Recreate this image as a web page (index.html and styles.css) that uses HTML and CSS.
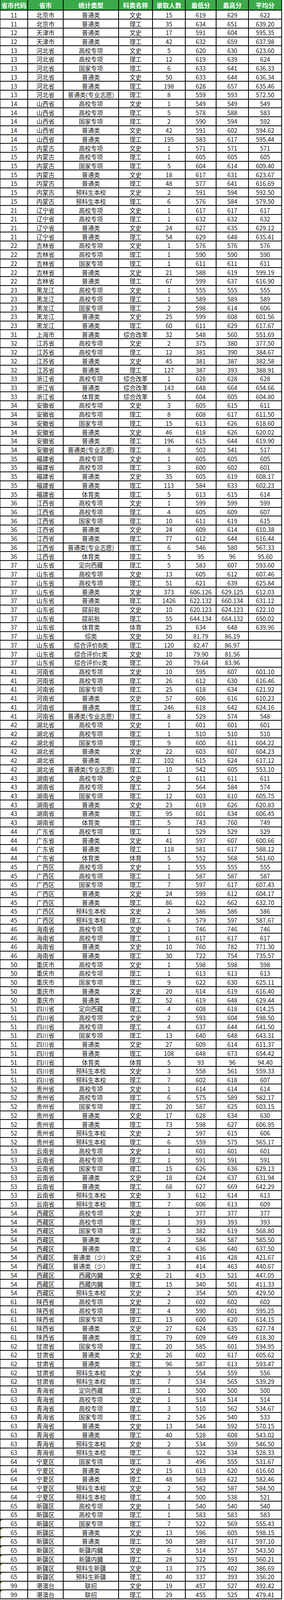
FILE: index.html
```html
<!DOCTYPE html>
<html lang="zh-CN">
<head>
<meta charset="utf-8">
<title>录取分数统计</title>
<link rel="stylesheet" href="styles.css">
</head>
<body>
<table class="scores">
<thead>
<tr><th>省市代码</th><th>省市</th><th>统计类型</th><th>科类名称</th><th>录取人数</th><th>最低分</th><th>最高分</th><th>平均分</th></tr>
</thead>
<tbody>
<tr><td>11</td><td>北京市</td><td>普通类</td><td>文史</td><td>15</td><td>619</td><td>629</td><td>622</td></tr>
<tr><td>11</td><td>北京市</td><td>普通类</td><td>理工</td><td>35</td><td>634</td><td>651</td><td>639.20</td></tr>
<tr><td>12</td><td>天津市</td><td>普通类</td><td>文史</td><td>17</td><td>591</td><td>604</td><td>595.35</td></tr>
<tr><td>12</td><td>天津市</td><td>普通类</td><td>理工</td><td>42</td><td>632</td><td>659</td><td>637.98</td></tr>
<tr><td>13</td><td>河北省</td><td>高校专项</td><td>文史</td><td>5</td><td>620</td><td>630</td><td>623.60</td></tr>
<tr><td>13</td><td>河北省</td><td>高校专项</td><td>理工</td><td>12</td><td>619</td><td>639</td><td>624</td></tr>
<tr><td>13</td><td>河北省</td><td>国家专项</td><td>理工</td><td>6</td><td>633</td><td>641</td><td>636.33</td></tr>
<tr><td>13</td><td>河北省</td><td>普通类</td><td>文史</td><td>50</td><td>633</td><td>644</td><td>636.34</td></tr>
<tr><td>13</td><td>河北省</td><td>普通类</td><td>理工</td><td>198</td><td>628</td><td>657</td><td>635.46</td></tr>
<tr><td>13</td><td>河北省</td><td>普通类(专业志愿)</td><td>理工</td><td>8</td><td>559</td><td>593</td><td>572.50</td></tr>
<tr><td>14</td><td>山西省</td><td>高校专项</td><td>文史</td><td>1</td><td>549</td><td>549</td><td>549</td></tr>
<tr><td>14</td><td>山西省</td><td>高校专项</td><td>理工</td><td>5</td><td>578</td><td>588</td><td>583</td></tr>
<tr><td>14</td><td>山西省</td><td>国家专项</td><td>理工</td><td>2</td><td>590</td><td>594</td><td>592</td></tr>
<tr><td>14</td><td>山西省</td><td>普通类</td><td>文史</td><td>42</td><td>591</td><td>602</td><td>594.62</td></tr>
<tr><td>14</td><td>山西省</td><td>普通类</td><td>理工</td><td>195</td><td>583</td><td>617</td><td>595.44</td></tr>
<tr><td>15</td><td>内蒙古</td><td>高校专项</td><td>文史</td><td>1</td><td>571</td><td>571</td><td>571</td></tr>
<tr><td>15</td><td>内蒙古</td><td>高校专项</td><td>理工</td><td>1</td><td>605</td><td>605</td><td>605</td></tr>
<tr><td>15</td><td>内蒙古</td><td>国家专项</td><td>理工</td><td>5</td><td>604</td><td>614</td><td>609.40</td></tr>
<tr><td>15</td><td>内蒙古</td><td>普通类</td><td>文史</td><td>18</td><td>617</td><td>631</td><td>623.67</td></tr>
<tr><td>15</td><td>内蒙古</td><td>普通类</td><td>理工</td><td>48</td><td>577</td><td>641</td><td>616.69</td></tr>
<tr><td>15</td><td>内蒙古</td><td>预科生本校</td><td>文史</td><td>2</td><td>591</td><td>594</td><td>592.50</td></tr>
<tr><td>15</td><td>内蒙古</td><td>预科生本校</td><td>理工</td><td>6</td><td>576</td><td>584</td><td>579.50</td></tr>
<tr><td>21</td><td>辽宁省</td><td>高校专项</td><td>文史</td><td>1</td><td>617</td><td>617</td><td>617</td></tr>
<tr><td>21</td><td>辽宁省</td><td>高校专项</td><td>理工</td><td>1</td><td>632</td><td>632</td><td>632</td></tr>
<tr><td>21</td><td>辽宁省</td><td>普通类</td><td>文史</td><td>24</td><td>627</td><td>635</td><td>629.12</td></tr>
<tr><td>21</td><td>辽宁省</td><td>普通类</td><td>理工</td><td>54</td><td>629</td><td>648</td><td>635.41</td></tr>
<tr><td>22</td><td>吉林省</td><td>高校专项</td><td>文史</td><td>1</td><td>576</td><td>576</td><td>576</td></tr>
<tr><td>22</td><td>吉林省</td><td>高校专项</td><td>理工</td><td>1</td><td>590</td><td>590</td><td>590</td></tr>
<tr><td>22</td><td>吉林省</td><td>国家专项</td><td>理工</td><td>1</td><td>611</td><td>611</td><td>611</td></tr>
<tr><td>22</td><td>吉林省</td><td>普通类</td><td>文史</td><td>21</td><td>588</td><td>619</td><td>599.19</td></tr>
<tr><td>22</td><td>吉林省</td><td>普通类</td><td>理工</td><td>67</td><td>599</td><td>637</td><td>616.90</td></tr>
<tr><td>23</td><td>黑龙江</td><td>高校专项</td><td>文史</td><td>1</td><td>555</td><td>555</td><td>555</td></tr>
<tr><td>23</td><td>黑龙江</td><td>高校专项</td><td>理工</td><td>1</td><td>589</td><td>589</td><td>589</td></tr>
<tr><td>23</td><td>黑龙江</td><td>国家专项</td><td>理工</td><td>2</td><td>598</td><td>614</td><td>606</td></tr>
<tr><td>23</td><td>黑龙江</td><td>普通类</td><td>文史</td><td>25</td><td>599</td><td>608</td><td>601.56</td></tr>
<tr><td>23</td><td>黑龙江</td><td>普通类</td><td>理工</td><td>60</td><td>611</td><td>629</td><td>617.67</td></tr>
<tr><td>31</td><td>上海市</td><td>普通类</td><td>综合改革</td><td>32</td><td>548</td><td>560</td><td>551.69</td></tr>
<tr><td>32</td><td>江苏省</td><td>高校专项</td><td>文史</td><td>2</td><td>375</td><td>380</td><td>377.50</td></tr>
<tr><td>32</td><td>江苏省</td><td>高校专项</td><td>理工</td><td>12</td><td>381</td><td>390</td><td>384.67</td></tr>
<tr><td>32</td><td>江苏省</td><td>普通类</td><td>文史</td><td>45</td><td>381</td><td>387</td><td>382.58</td></tr>
<tr><td>32</td><td>江苏省</td><td>普通类</td><td>理工</td><td>127</td><td>387</td><td>393</td><td>388.91</td></tr>
<tr><td>33</td><td>浙江省</td><td>高校专项</td><td>综合改革</td><td>1</td><td>628</td><td>628</td><td>628</td></tr>
<tr><td>33</td><td>浙江省</td><td>普通类</td><td>综合改革</td><td>143</td><td>648</td><td>664</td><td>654.66</td></tr>
<tr><td>33</td><td>浙江省</td><td>体育类</td><td>综合改革</td><td>5</td><td>604</td><td>605</td><td>604.80</td></tr>
<tr><td>34</td><td>安徽省</td><td>高校专项</td><td>文史</td><td>3</td><td>605</td><td>615</td><td>611</td></tr>
<tr><td>34</td><td>安徽省</td><td>高校专项</td><td>理工</td><td>8</td><td>608</td><td>617</td><td>611.50</td></tr>
<tr><td>34</td><td>安徽省</td><td>国家专项</td><td>理工</td><td>15</td><td>613</td><td>626</td><td>618.60</td></tr>
<tr><td>34</td><td>安徽省</td><td>普通类</td><td>文史</td><td>46</td><td>618</td><td>626</td><td>620.02</td></tr>
<tr><td>34</td><td>安徽省</td><td>普通类</td><td>理工</td><td>196</td><td>615</td><td>644</td><td>619.90</td></tr>
<tr><td>34</td><td>安徽省</td><td>普通类(专业志愿)</td><td>理工</td><td>8</td><td>502</td><td>541</td><td>517</td></tr>
<tr><td>35</td><td>福建省</td><td>高校专项</td><td>文史</td><td>1</td><td>605</td><td>605</td><td>605</td></tr>
<tr><td>35</td><td>福建省</td><td>高校专项</td><td>理工</td><td>3</td><td>600</td><td>602</td><td>601</td></tr>
<tr><td>35</td><td>福建省</td><td>普通类</td><td>文史</td><td>35</td><td>605</td><td>619</td><td>608.17</td></tr>
<tr><td>35</td><td>福建省</td><td>普通类</td><td>理工</td><td>113</td><td>584</td><td>633</td><td>602.23</td></tr>
<tr><td>35</td><td>福建省</td><td>体育类</td><td>理工</td><td>5</td><td>613</td><td>615</td><td>614</td></tr>
<tr><td>36</td><td>江西省</td><td>高校专项</td><td>文史</td><td>1</td><td>599</td><td>599</td><td>599</td></tr>
<tr><td>36</td><td>江西省</td><td>高校专项</td><td>理工</td><td>4</td><td>605</td><td>609</td><td>607</td></tr>
<tr><td>36</td><td>江西省</td><td>国家专项</td><td>理工</td><td>10</td><td>611</td><td>619</td><td>615</td></tr>
<tr><td>36</td><td>江西省</td><td>普通类</td><td>文史</td><td>24</td><td>609</td><td>614</td><td>610.38</td></tr>
<tr><td>36</td><td>江西省</td><td>普通类</td><td>理工</td><td>77</td><td>612</td><td>644</td><td>616.44</td></tr>
<tr><td>36</td><td>江西省</td><td>普通类(专业志愿)</td><td>理工</td><td>6</td><td>546</td><td>580</td><td>567.33</td></tr>
<tr><td>36</td><td>江西省</td><td>体育类</td><td>理工</td><td>5</td><td>95</td><td>96</td><td>95.60</td></tr>
<tr><td>37</td><td>山东省</td><td>定向西藏</td><td>理工</td><td>5</td><td>583</td><td>607</td><td>593.60</td></tr>
<tr><td>37</td><td>山东省</td><td>高校专项</td><td>文史</td><td>13</td><td>605</td><td>612</td><td>607.46</td></tr>
<tr><td>37</td><td>山东省</td><td>高校专项</td><td>理工</td><td>51</td><td>621</td><td>639</td><td>625.84</td></tr>
<tr><td>37</td><td>山东省</td><td>普通类</td><td>文史</td><td>373</td><td>606.126</td><td>629.125</td><td>612.03</td></tr>
<tr><td>37</td><td>山东省</td><td>普通类</td><td>理工</td><td>1426</td><td>622.132</td><td>660.134</td><td>631.12</td></tr>
<tr><td>37</td><td>山东省</td><td>提前批</td><td>文史</td><td>10</td><td>620.123</td><td>624.123</td><td>622.10</td></tr>
<tr><td>37</td><td>山东省</td><td>提前批</td><td>理工</td><td>55</td><td>644.134</td><td>664.132</td><td>650.02</td></tr>
<tr><td>37</td><td>山东省</td><td>体育类</td><td>体育</td><td>25</td><td>634</td><td>648</td><td>639.96</td></tr>
<tr><td>37</td><td>山东省</td><td>综类</td><td>文史</td><td>50</td><td>81.79</td><td>86.19</td><td></td></tr>
<tr><td>37</td><td>山东省</td><td>综合评价B类</td><td>理工</td><td>120</td><td>82.47</td><td>86.97</td><td></td></tr>
<tr><td>37</td><td>山东省</td><td>综合评价c类</td><td>文史</td><td>10</td><td>79.90</td><td>81.56</td><td></td></tr>
<tr><td>37</td><td>山东省</td><td>综合评价c类</td><td>理工</td><td>20</td><td>79.64</td><td>83.96</td><td></td></tr>
<tr><td>41</td><td>河南省</td><td>高校专项</td><td>文史</td><td>10</td><td>595</td><td>607</td><td>601.10</td></tr>
<tr><td>41</td><td>河南省</td><td>高校专项</td><td>理工</td><td>26</td><td>612</td><td>630</td><td>616.46</td></tr>
<tr><td>41</td><td>河南省</td><td>国家专项</td><td>理工</td><td>25</td><td>618</td><td>634</td><td>621.92</td></tr>
<tr><td>41</td><td>河南省</td><td>普通类</td><td>文史</td><td>57</td><td>606</td><td>616</td><td>610.23</td></tr>
<tr><td>41</td><td>河南省</td><td>普通类</td><td>理工</td><td>246</td><td>618</td><td>642</td><td>624.16</td></tr>
<tr><td>41</td><td>河南省</td><td>普通类(专业志愿)</td><td>理工</td><td>8</td><td>529</td><td>574</td><td>548</td></tr>
<tr><td>42</td><td>湖北省</td><td>高校专项</td><td>文史</td><td>1</td><td>601</td><td>601</td><td>601</td></tr>
<tr><td>42</td><td>湖北省</td><td>高校专项</td><td>理工</td><td>1</td><td>510</td><td>510</td><td>510</td></tr>
<tr><td>42</td><td>湖北省</td><td>国家专项</td><td>理工</td><td>9</td><td>600</td><td>611</td><td>604.22</td></tr>
<tr><td>42</td><td>湖北省</td><td>普通类</td><td>文史</td><td>22</td><td>603</td><td>607</td><td>604.23</td></tr>
<tr><td>42</td><td>湖北省</td><td>普通类</td><td>理工</td><td>102</td><td>615</td><td>624</td><td>617.12</td></tr>
<tr><td>42</td><td>湖北省</td><td>普通类(专业志愿)</td><td>理工</td><td>10</td><td>542</td><td>605</td><td>553.10</td></tr>
<tr><td>43</td><td>湖南省</td><td>高校专项</td><td>文史</td><td>1</td><td>611</td><td>611</td><td>611</td></tr>
<tr><td>43</td><td>湖南省</td><td>高校专项</td><td>理工</td><td>2</td><td>564</td><td>584</td><td>574</td></tr>
<tr><td>43</td><td>湖南省</td><td>国家专项</td><td>理工</td><td>12</td><td>603</td><td>610</td><td>605.75</td></tr>
<tr><td>43</td><td>湖南省</td><td>普通类</td><td>文史</td><td>23</td><td>619</td><td>626</td><td>620.83</td></tr>
<tr><td>43</td><td>湖南省</td><td>普通类</td><td>理工</td><td>95</td><td>601</td><td>634</td><td>606.45</td></tr>
<tr><td>43</td><td>湖南省</td><td>体育类</td><td>理工</td><td>5</td><td>743</td><td>760</td><td>749</td></tr>
<tr><td>44</td><td>广东省</td><td>高校专项</td><td>理工</td><td>1</td><td>529</td><td>529</td><td>529</td></tr>
<tr><td>44</td><td>广东省</td><td>普通类</td><td>文史</td><td>41</td><td>597</td><td>607</td><td>600.66</td></tr>
<tr><td>44</td><td>广东省</td><td>普通类</td><td>理工</td><td>118</td><td>581</td><td>617</td><td>588.12</td></tr>
<tr><td>44</td><td>广东省</td><td>体育类</td><td>体育</td><td>5</td><td>552</td><td>568</td><td>561.60</td></tr>
<tr><td>45</td><td>广西区</td><td>高校专项</td><td>文史</td><td>1</td><td>555</td><td>555</td><td>555</td></tr>
<tr><td>45</td><td>广西区</td><td>高校专项</td><td>理工</td><td>1</td><td>587</td><td>587</td><td>587</td></tr>
<tr><td>45</td><td>广西区</td><td>国家专项</td><td>理工</td><td>7</td><td>597</td><td>617</td><td>607.43</td></tr>
<tr><td>45</td><td>广西区</td><td>普通类</td><td>文史</td><td>24</td><td>599</td><td>612</td><td>604.17</td></tr>
<tr><td>45</td><td>广西区</td><td>普通类</td><td>理工</td><td>86</td><td>622</td><td>662</td><td>632.70</td></tr>
<tr><td>45</td><td>广西区</td><td>预科生本校</td><td>文史</td><td>2</td><td>586</td><td>586</td><td>586</td></tr>
<tr><td>45</td><td>广西区</td><td>预科生本校</td><td>理工</td><td>6</td><td>579</td><td>597</td><td>587.67</td></tr>
<tr><td>46</td><td>海南省</td><td>高校专项</td><td>文史</td><td>1</td><td>746</td><td>746</td><td>746</td></tr>
<tr><td>46</td><td>海南省</td><td>高校专项</td><td>理工</td><td>1</td><td>617</td><td>617</td><td>617</td></tr>
<tr><td>46</td><td>海南省</td><td>普通类</td><td>文史</td><td>10</td><td>760</td><td>782</td><td>771.30</td></tr>
<tr><td>46</td><td>海南省</td><td>普通类</td><td>理工</td><td>30</td><td>722</td><td>754</td><td>735.57</td></tr>
<tr><td>50</td><td>重庆市</td><td>高校专项</td><td>文史</td><td>1</td><td>598</td><td>598</td><td>598</td></tr>
<tr><td>50</td><td>重庆市</td><td>高校专项</td><td>理工</td><td>1</td><td>613</td><td>613</td><td>613</td></tr>
<tr><td>50</td><td>重庆市</td><td>国家专项</td><td>理工</td><td>9</td><td>622</td><td>630</td><td>625.11</td></tr>
<tr><td>50</td><td>重庆市</td><td>普通类</td><td>文史</td><td>20</td><td>614</td><td>619</td><td>616.40</td></tr>
<tr><td>50</td><td>重庆市</td><td>普通类</td><td>理工</td><td>52</td><td>619</td><td>648</td><td>629.44</td></tr>
<tr><td>51</td><td>四川省</td><td>定向西藏</td><td>理工</td><td>4</td><td>608</td><td>618</td><td>614.25</td></tr>
<tr><td>51</td><td>四川省</td><td>高校专项</td><td>文史</td><td>2</td><td>593</td><td>604</td><td>598.50</td></tr>
<tr><td>51</td><td>四川省</td><td>高校专项</td><td>理工</td><td>4</td><td>637</td><td>644</td><td>641.50</td></tr>
<tr><td>51</td><td>四川省</td><td>国家专项</td><td>理工</td><td>13</td><td>640</td><td>648</td><td>643.31</td></tr>
<tr><td>51</td><td>四川省</td><td>普通类</td><td>文史</td><td>27</td><td>609</td><td>614</td><td>611.37</td></tr>
<tr><td>51</td><td>四川省</td><td>普通类</td><td>理工</td><td>108</td><td>648</td><td>673</td><td>654.42</td></tr>
<tr><td>51</td><td>四川省</td><td>体育类</td><td>体育</td><td>5</td><td>93</td><td>96</td><td>94.40</td></tr>
<tr><td>51</td><td>四川省</td><td>预科生本校</td><td>文史</td><td>3</td><td>558</td><td>561</td><td>559.33</td></tr>
<tr><td>51</td><td>四川省</td><td>预科生本校</td><td>理工</td><td>7</td><td>602</td><td>618</td><td>607</td></tr>
<tr><td>52</td><td>贵州省</td><td>高校专项</td><td>文史</td><td>1</td><td>614</td><td>614</td><td>614</td></tr>
<tr><td>52</td><td>贵州省</td><td>高校专项</td><td>理工</td><td>6</td><td>575</td><td>589</td><td>582.17</td></tr>
<tr><td>52</td><td>贵州省</td><td>国家专项</td><td>理工</td><td>20</td><td>587</td><td>625</td><td>603.15</td></tr>
<tr><td>52</td><td>贵州省</td><td>普通类</td><td>文史</td><td>17</td><td>628</td><td>634</td><td>630</td></tr>
<tr><td>52</td><td>贵州省</td><td>普通类</td><td>理工</td><td>73</td><td>598</td><td>627</td><td>606.95</td></tr>
<tr><td>52</td><td>贵州省</td><td>预科生本校</td><td>文史</td><td>2</td><td>597</td><td>615</td><td>606</td></tr>
<tr><td>52</td><td>贵州省</td><td>预科生本校</td><td>理工</td><td>6</td><td>559</td><td>575</td><td>565.17</td></tr>
<tr><td>53</td><td>云南省</td><td>高校专项</td><td>文史</td><td>1</td><td>601</td><td>601</td><td>601</td></tr>
<tr><td>53</td><td>云南省</td><td>高校专项</td><td>理工</td><td>1</td><td>591</td><td>591</td><td>591</td></tr>
<tr><td>53</td><td>云南省</td><td>国家专项</td><td>理工</td><td>15</td><td>626</td><td>636</td><td>629.13</td></tr>
<tr><td>53</td><td>云南省</td><td>普通类</td><td>文史</td><td>18</td><td>624</td><td>637</td><td>631.94</td></tr>
<tr><td>53</td><td>云南省</td><td>普通类</td><td>理工</td><td>68</td><td>627</td><td>669</td><td>642.29</td></tr>
<tr><td>53</td><td>云南省</td><td>预科生本校</td><td>文史</td><td>3</td><td>612</td><td>614</td><td>613</td></tr>
<tr><td>53</td><td>云南省</td><td>预科生本校</td><td>理工</td><td>7</td><td>606</td><td>613</td><td>609</td></tr>
<tr><td>54</td><td>西藏区</td><td>高校专项</td><td>文史</td><td>1</td><td>377</td><td>377</td><td>377</td></tr>
<tr><td>54</td><td>西藏区</td><td>高校专项</td><td>理工</td><td>1</td><td>393</td><td>393</td><td>393</td></tr>
<tr><td>54</td><td>西藏区</td><td>国家专项</td><td>理工</td><td>5</td><td>382</td><td>619</td><td>568.80</td></tr>
<tr><td>54</td><td>西藏区</td><td>普通类</td><td>文史</td><td>2</td><td>584</td><td>587</td><td>585.50</td></tr>
<tr><td>54</td><td>西藏区</td><td>普通类</td><td>理工</td><td>4</td><td>636</td><td>640</td><td>637.50</td></tr>
<tr><td>54</td><td>西藏区</td><td>普通类（少）</td><td>文史</td><td>3</td><td>416</td><td>428</td><td>421.67</td></tr>
<tr><td>54</td><td>西藏区</td><td>普通类（少）</td><td>理工</td><td>3</td><td>414</td><td>463</td><td>440.67</td></tr>
<tr><td>54</td><td>西藏区</td><td>西藏内臓</td><td>文史</td><td>21</td><td>415</td><td>521</td><td>447.05</td></tr>
<tr><td>54</td><td>西藏区</td><td>西藏内臓</td><td>理工</td><td>15</td><td>340</td><td>501</td><td>411.33</td></tr>
<tr><td>54</td><td>西藏区</td><td>预科生本校</td><td>文史</td><td>2</td><td>354</td><td>505</td><td>429.50</td></tr>
<tr><td>61</td><td>陕西省</td><td>高校专项</td><td>文史</td><td>2</td><td>602</td><td>602</td><td>602</td></tr>
<tr><td>61</td><td>陕西省</td><td>高校专项</td><td>理工</td><td>4</td><td>590</td><td>601</td><td>595.25</td></tr>
<tr><td>61</td><td>陕西省</td><td>国家专项</td><td>理工</td><td>13</td><td>600</td><td>620</td><td>614.15</td></tr>
<tr><td>61</td><td>陕西省</td><td>普通类</td><td>文史</td><td>27</td><td>624</td><td>635</td><td>627.74</td></tr>
<tr><td>61</td><td>陕西省</td><td>普通类</td><td>理工</td><td>79</td><td>609</td><td>649</td><td>618.30</td></tr>
<tr><td>62</td><td>甘肃省</td><td>国家专项</td><td>理工</td><td>20</td><td>585</td><td>601</td><td>594.95</td></tr>
<tr><td>62</td><td>甘肃省</td><td>普通类</td><td>文史</td><td>26</td><td>602</td><td>617</td><td>605.62</td></tr>
<tr><td>62</td><td>甘肃省</td><td>普通类</td><td>理工</td><td>96</td><td>587</td><td>613</td><td>593.47</td></tr>
<tr><td>62</td><td>甘肃省</td><td>预科生本校</td><td>文史</td><td>3</td><td>554</td><td>559</td><td>556</td></tr>
<tr><td>62</td><td>甘肃省</td><td>预科生本校</td><td>理工</td><td>7</td><td>534</td><td>565</td><td>539.29</td></tr>
<tr><td>63</td><td>青海省</td><td>定向西藏</td><td>理工</td><td>1</td><td>500</td><td>500</td><td>500</td></tr>
<tr><td>63</td><td>青海省</td><td>高校专项</td><td>文史</td><td>1</td><td>514</td><td>514</td><td>514</td></tr>
<tr><td>63</td><td>青海省</td><td>高校专项</td><td>理工</td><td>3</td><td>510</td><td>562</td><td>534.67</td></tr>
<tr><td>63</td><td>青海省</td><td>国家专项</td><td>理工</td><td>2</td><td>526</td><td>540</td><td>533</td></tr>
<tr><td>63</td><td>青海省</td><td>普通类</td><td>文史</td><td>13</td><td>544</td><td>592</td><td>570.15</td></tr>
<tr><td>63</td><td>青海省</td><td>普通类</td><td>理工</td><td>40</td><td>528</td><td>608</td><td>543.02</td></tr>
<tr><td>63</td><td>青海省</td><td>预科生本校</td><td>文史</td><td>2</td><td>534</td><td>559</td><td>546.50</td></tr>
<tr><td>63</td><td>青海省</td><td>预科生本校</td><td>理工</td><td>6</td><td>522</td><td>534</td><td>528.33</td></tr>
<tr><td>64</td><td>宁夏区</td><td>国家专项</td><td>理工</td><td>3</td><td>496</td><td>555</td><td>531.67</td></tr>
<tr><td>64</td><td>宁夏区</td><td>普通类</td><td>文史</td><td>15</td><td>613</td><td>620</td><td>616.60</td></tr>
<tr><td>64</td><td>宁夏区</td><td>普通类</td><td>理工</td><td>48</td><td>569</td><td>622</td><td>582.46</td></tr>
<tr><td>64</td><td>宁夏区</td><td>预科生本校</td><td>文史</td><td>2</td><td>582</td><td>587</td><td>584.50</td></tr>
<tr><td>64</td><td>宁夏区</td><td>预科生本校</td><td>理工</td><td>4</td><td>500</td><td>538</td><td>521</td></tr>
<tr><td>65</td><td>新疆区</td><td>高校专项</td><td>文史</td><td>1</td><td>540</td><td>540</td><td>540</td></tr>
<tr><td>65</td><td>新疆区</td><td>高校专项</td><td>理工</td><td>1</td><td>583</td><td>583</td><td>583</td></tr>
<tr><td class="note">65</td><td>新疆区</td><td>国家专项</td><td>理工</td><td>7</td><td>522</td><td>569</td><td>555.43</td></tr>
<tr><td class="note">65</td><td>新疆区</td><td>普通类</td><td>文史</td><td>13</td><td>596</td><td>605</td><td>598.15</td></tr>
<tr><td class="note">65</td><td>新疆区</td><td>普通类</td><td>理工</td><td>50</td><td>589</td><td>617</td><td>597.10</td></tr>
<tr><td class="note">65</td><td>新疆区</td><td>新疆内臓</td><td>文史</td><td>6</td><td>514</td><td>557</td><td>543.50</td></tr>
<tr><td class="note">65</td><td>新疆区</td><td>新疆内臓</td><td>理工</td><td>28</td><td>522</td><td>593</td><td>560.21</td></tr>
<tr><td class="note">65</td><td>新疆区</td><td>预科生新疆</td><td>文史</td><td>13</td><td>375</td><td>402</td><td>386.69</td></tr>
<tr><td class="note">65</td><td>新疆区</td><td>预科生新疆</td><td>理工</td><td>40</td><td>337</td><td>393</td><td>356.20</td></tr>
<tr><td class="note">99</td><td>港澳台</td><td>联招</td><td>文史</td><td>19</td><td>457</td><td>527</td><td>492.42</td></tr>
<tr><td class="note">99</td><td>港澳台</td><td>联招</td><td>理工</td><td>29</td><td>455</td><td>525</td><td>479.41</td></tr>
</tbody>
</table>
</body>
</html>
```

FILE: styles.css
```css
html, body {
  margin: 0;
  padding: 0;
  background: #ffffff;
}

body {
  font-family: "Noto Sans CJK SC", "Noto Sans CJK JP", sans-serif;
  color: #1a1a1a;
}

/* Table laid out with fixed-pitch grid rows (pitch sized to fit the 4096px viewport) */
.scores {
  display: block;
  width: 723px;
  border-left: 1px solid #000;
}

.scores thead,
.scores tbody {
  display: block;
}

.scores tr {
  display: grid;
  grid-template-columns: 71px 91px 142px 87px 84px 79px 83px 85px;
  grid-template-rows: 1fr;
  height: 22.72px;
  overflow: hidden;
}

.scores thead tr {
  height: 27.45px;
}

.scores th,
.scores td {
  box-sizing: border-box;
  display: flex;
  align-items: center;
  justify-content: center;
  min-height: 0;
  padding: 0;
  white-space: nowrap;
  overflow: hidden;
  border-right: 2px solid #000;
  border-bottom: 2px solid #000;
  line-height: 18px;
}

.scores th {
  background: #3ca94b;
  color: #ffffff;
  font-size: 16px;
  font-weight: 700;
}

.scores td {
  font-size: 15.5px;
  font-weight: 400;
}

.scores td.note {
  position: relative;
}

.scores td.note::before {
  content: "";
  position: absolute;
  left: 0;
  top: 0;
  border-top: 5px solid #6b6a1e;
  border-right: 5px solid transparent;
}
```
